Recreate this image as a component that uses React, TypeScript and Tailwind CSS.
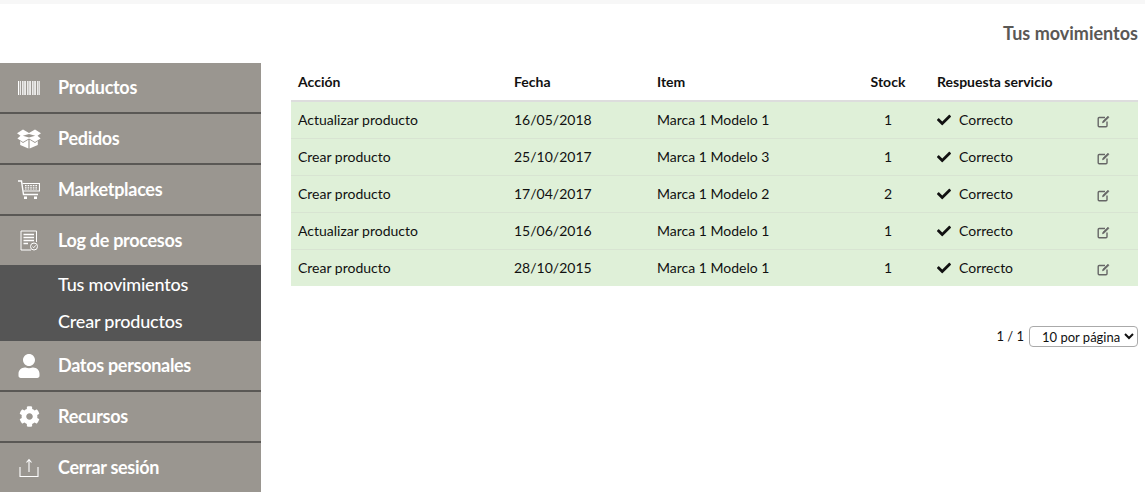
import React from 'react';
import { FaCheck, FaCog, FaUser } from 'react-icons/fa';

function BarcodeIcon() {
  return (
    <svg width="22" height="14" viewBox="0 0 22 14" fill="#fff">
      {[0, 2, 4, 5.5, 7, 9, 10.5, 12, 14, 15.5, 17, 19, 20.5].map((x, i) => (
        <rect key={i} x={x} y="0" width={i % 3 === 0 ? 1.2 : 0.8} height="14" />
      ))}
    </svg>
  );
}

function BoxIcon() {
  return (
    <svg width="24" height="20" viewBox="0 0 24 20" fill="#fff">
      <path d="M6 0.5 12 4 18 0.5 24 4.2 20.5 6.8 23.6 9.4 18 13 12 9.4 6 13 0.4 9.4 3.5 6.8 0 4.2Z" />
      <path d="M12 5 5.8 6.8 12 8.6 18.2 6.8Z" fill="#9a9690" />
      <path d="M3.2 12 6 14 11.4 10.8V19.6L3.2 16Z" />
      <path d="M20.8 12 18 14 12.6 10.8V19.6L20.8 16Z" />
    </svg>
  );
}

function CartIcon() {
  return (
    <svg width="22" height="20" viewBox="0 0 22 20" fill="none" stroke="#fff">
      <path d="M0 1H3.5L5.5 14.5H20" strokeWidth="1.4" />
      <path d="M4.5 3.5H21.5V11H5.5" strokeWidth="1.2" />
      <path d="M7 5.5H20M7 7.2H20M7 9H20" strokeWidth="1.1" strokeDasharray="1.6 1" />
      <rect x="6" y="16.5" width="3" height="2.5" fill="#fff" stroke="none" />
      <rect x="16" y="16.5" width="3" height="2.5" fill="#fff" stroke="none" />
    </svg>
  );
}

function LogIcon() {
  return (
    <svg width="18" height="21" viewBox="0 0 18 21" fill="none" stroke="#fff">
      <path d="M16.5 12V1H1V20H11" strokeWidth="1" />
      <path d="M3.5 4.5H14M3.5 7.5H14M3.5 10.5H14M3.5 13.5H8" strokeWidth="1.3" />
      <circle cx="14" cy="16.5" r="3.5" strokeWidth="1" />
      <path d="M12.5 16.5 13.7 17.8 15.6 15.4" strokeWidth="0.9" />
    </svg>
  );
}

function LogoutIcon() {
  return (
    <svg width="20" height="20" viewBox="0 0 20 20" fill="none" stroke="#fff" strokeWidth="1.1">
      <path d="M1 9V18.5H19V9" />
      <path d="M10 14V2M7.5 4.5 10 1.5 12.5 4.5" />
    </svg>
  );
}

function EditIcon() {
  return (
    <svg width="13" height="13" viewBox="0 0 13 13" fill="none" stroke="#666" strokeWidth="1.4" className="inline-block">
      <path d="M8 2.5H2.2A1 1 0 0 0 1.2 3.5V10.8A1 1 0 0 0 2.2 11.8H9A1 1 0 0 0 10 10.8V6.5" />
      <path d="M5.5 7.8 6 6 11 1.2 12 2.3 7 7.2Z" fill="#666" strokeWidth="0.7" />
    </svg>
  );
}

const menu = [
  { label: 'Productos', icon: <BarcodeIcon /> },
  { label: 'Pedidos', icon: <BoxIcon /> },
  { label: 'Marketplaces', icon: <CartIcon /> },
  { label: 'Log de procesos', icon: <LogIcon /> },
];

const menu2 = [
  { label: 'Datos personales', icon: <FaUser size={24} color="#fff" /> },
  { label: 'Recursos', icon: <FaCog size={21} color="#fff" /> },
  { label: 'Cerrar sesión', icon: <LogoutIcon /> },
];

const rows = [
  ['Actualizar producto', '16/05/2018', 'Marca 1 Modelo 1', '1'],
  ['Crear producto', '25/10/2017', 'Marca 1 Modelo 3', '1'],
  ['Crear producto', '17/04/2017', 'Marca 1 Modelo 2', '2'],
  ['Actualizar producto', '15/06/2016', 'Marca 1 Modelo 1', '1'],
  ['Crear producto', '28/10/2015', 'Marca 1 Modelo 1', '1'],
];

function MenuItem({ label, icon, last }: { label: string; icon: React.ReactNode; last: boolean }) {
  return (
    <div className={`flex items-center bg-[#9a9690] text-white ${last ? 'h-[49px]' : 'h-[51px] border-b-2 border-[#5a5855]'}`}>
      <div className="flex w-[58px] shrink-0 justify-center pr-[0px]">{icon}</div>
      <span className="text-[18px] font-bold tracking-[-0.3px]">{label}</span>
    </div>
  );
}

export default function App() {
  return (
    <div className="h-[495px] w-[1145px] overflow-hidden bg-white font-['Lato','Liberation_Sans',sans-serif] text-[#111]">
      <div className="h-[4px] bg-[#f7f7f7]" />
      <div className="flex h-[59px] items-start justify-end pr-[7px] pt-[17px]">
        <h1 className="text-[18px] leading-[24px] font-bold text-[#5a5855]">Tus movimientos</h1>
      </div>
      <div className="flex">
        <nav className="w-[261px] shrink-0">
          {menu.map((m, i) => (
            <MenuItem key={m.label} label={m.label} icon={m.icon} last={i === 3} />
          ))}
          <div className="flex h-[76px] flex-col bg-[#555555] pl-[58px] pt-[1px] text-[18px] font-medium tracking-[-0.2px] text-white">
            <span className="h-[37px] leading-[37px]">Tus movimientos</span>
            <span className="h-[37px] leading-[37px]">Crear productos</span>
          </div>
          {menu2.map((m, i) => (
            <MenuItem key={m.label} label={m.label} icon={m.icon} last={i === 2} />
          ))}
        </nav>
        <main className="ml-[30px] w-[847px]">
          <table className="w-full table-fixed border-collapse text-[14px]">
            <colgroup>
              <col className="w-[216px]" />
              <col className="w-[143px]" />
              <col className="w-[196px]" />
              <col className="w-[84px]" />
              <col className="w-[160px]" />
              <col className="w-[48px]" />
            </colgroup>
            <thead>
              <tr className="h-[38px] border-b-2 border-[#dddddd] text-left font-bold">
                <th className="px-[7px]">Acción</th>
                <th className="px-[7px]">Fecha</th>
                <th className="px-[7px]">Item</th>
                <th className="px-[7px] text-center">Stock</th>
                <th className="px-[7px]">Respuesta servicio</th>
                <th />
              </tr>
            </thead>
            <tbody>
              {rows.map((r, i) => (
                <tr key={i} className="h-[37px] border-b border-[#d8e4d2] bg-[#dff0d8] last:border-b-0">
                  <td className="px-[7px]">{r[0]}</td>
                  <td className="px-[7px]">{r[1]}</td>
                  <td className="px-[7px]">{r[2]}</td>
                  <td className="px-[7px] text-center">{r[3]}</td>
                  <td className="px-[7px]">
                    <span className="flex items-center gap-[8px]">
                      <FaCheck size={14} color="#111" />
                      Correcto
                    </span>
                  </td>
                  <td className="px-[7px]">
                    <EditIcon />
                  </td>
                </tr>
              ))}
            </tbody>
          </table>
          <div className="mt-[40px] flex items-center justify-end gap-[5px] text-[13px]">
            <span>1 / 1</span>
            <select className="h-[21px] w-[109px] rounded-[4px] border border-[#aaaaaa] bg-white pl-[8px] text-[13px]">
              <option>10 por página</option>
            </select>
          </div>
        </main>
      </div>
    </div>
  );
}
